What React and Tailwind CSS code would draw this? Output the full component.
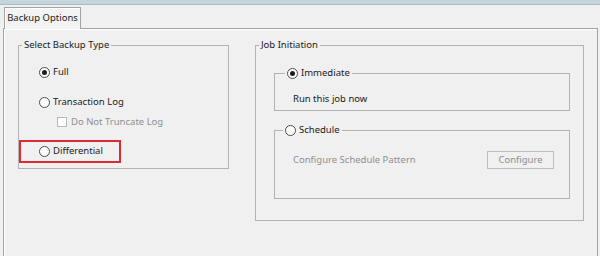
import React from 'react';

function Radio({ checked }) {
    return (
        <span className="w-[11px] h-[11px] rounded-full border border-[#4a4a4a] bg-white flex items-center justify-center shrink-0">
            {checked && <span className="w-[5px] h-[5px] rounded-full bg-[#1c1c1c]" />}
        </span>
    );
}

function RadioRow({ label, checked }) {
    return (
        <div className="h-[14px] flex items-center gap-[3px]">
            <Radio checked={checked} />
            <span>{label}</span>
        </div>
    );
}

export default function App() {
    return (
        <div className="w-[600px] h-[256px] overflow-hidden bg-[#f0f0f0] text-[9.5px] leading-none text-[#1a1a1a] font-['Noto_Sans',sans-serif]">
            <div className="h-[5px] bg-[#c4d5de] border-b border-[#a9bbc4]" />

            <div className="h-[23px] pl-[4px] pt-[2px] flex">
                <div className="relative z-10 w-[77px] h-[22px] border border-b-0 border-[#a3a3a3] bg-[#f3f3f3] shadow-[inset_1px_1px_0_#fff] flex items-center justify-center pb-[2px]">
                    Backup Options
                </div>
            </div>

            <div className="ml-[3px] w-[595px] h-[240px] border border-[#a3a3a3] shadow-[inset_1px_1px_0_#fff] pt-[9px] pl-[14px] pr-[13px] flex items-start gap-[26px]">
                <fieldset className="w-[211px] border border-[#b3b3b3]">
                    <legend className="h-[14px] ml-[3px] px-[2px] flex items-center">Select Backup Type</legend>
                    <div className="pt-[13px] pl-[20px] pb-[10px] flex flex-col">
                        <RadioRow label="Full" checked />
                        <div className="mt-[16px]">
                            <RadioRow label="Transaction Log" />
                        </div>
                        <div className="mt-[6px] ml-[18px] h-[14px] flex items-center gap-[4px] text-[#8f8f8f]">
                            <span className="w-[10px] h-[10px] border border-[#b8b8b8] bg-white shrink-0" />
                            <span>Do Not Truncate Log</span>
                        </div>
                        <div className="relative mt-[15px]">
                            <RadioRow label="Differential" />
                            <span className="absolute left-[-20px] top-[-4px] w-[102px] h-[23px] border-2 border-[#dc2a30]" />
                        </div>
                    </div>
                </fieldset>

                <fieldset className="w-[329px] border border-[#b3b3b3]">
                    <legend className="h-[14px] ml-[3px] px-[2px] flex items-center">Job Initiation</legend>
                    <div className="pl-[18px] pr-[13px] pb-[21px]">
                        <fieldset className="mt-[14px] border border-[#b3b3b3]">
                            <legend className="h-[14px] ml-[10px] px-[2px] flex items-center">
                                <RadioRow label="Immediate" checked />
                            </legend>
                            <div className="mt-[12px] mb-[4px] ml-[18px] h-[14px] flex items-center">Run this job now</div>
                        </fieldset>

                        <fieldset className="mt-[12px] border border-[#b3b3b3]">
                            <legend className="h-[14px] ml-[8px] px-[2px] flex items-center">
                                <RadioRow label="Schedule" />
                            </legend>
                            <div className="mt-[14px] mb-[29px] ml-[18px] mr-[15px] h-[18px] flex items-center justify-between text-[#8f8f8f]">
                                <span>Configure Schedule Pattern</span>
                                <span className="w-[67px] h-[18px] border border-[#bdbdbd] bg-[#f0f0f0] flex items-center justify-center">
                                    Configure
                                </span>
                            </div>
                        </fieldset>
                    </div>
                </fieldset>
            </div>
        </div>
    );
}
